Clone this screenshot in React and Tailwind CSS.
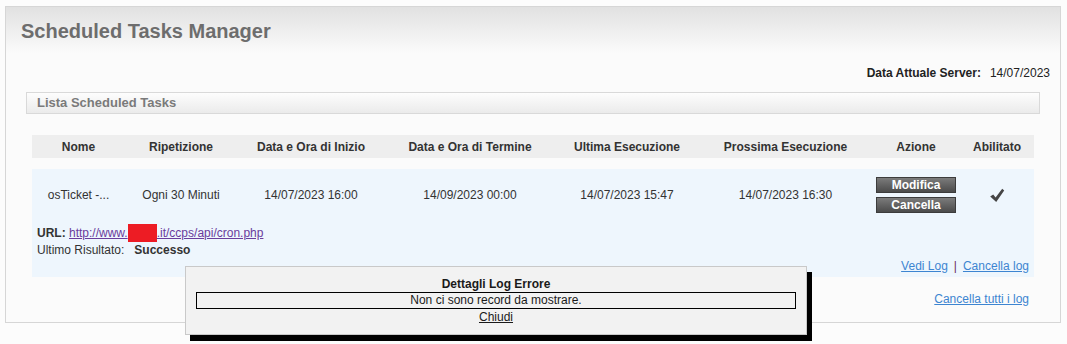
import React from 'react';

const columns = [
  { key: 'nome', label: 'Nome' },
  { key: 'ripetizione', label: 'Ripetizione' },
  { key: 'inizio', label: 'Data e Ora di Inizio' },
  { key: 'termine', label: 'Data e Ora di Termine' },
  { key: 'ultima', label: 'Ultima Esecuzione' },
  { key: 'prossima', label: 'Prossima Esecuzione' },
  { key: 'azione', label: 'Azione' },
  { key: 'abilitato', label: 'Abilitato' },
];

const task = {
  nome: 'osTicket -...',
  ripetizione: 'Ogni 30 Minuti',
  inizio: '14/07/2023 16:00',
  termine: '14/09/2023 00:00',
  ultima: '14/07/2023 15:47',
  prossima: '14/07/2023 16:30',
};

const gridCols = 'grid grid-cols-[93px_112px_148px_170px_144px_173px_88px_74px]';

function ActionButton({ children }) {
  return (
    <button className="w-[80px] h-[16px] border border-[#3c3c3c] bg-[linear-gradient(#7b7b7b,#4b4b4b)] text-white font-bold text-[12px] leading-[14px]">
      {children}
    </button>
  );
}

function CheckIcon() {
  return (
    <svg width="16" height="15" viewBox="0 0 16 15">
      <path d="M1.2 8.4 L4.2 6.4 L6.6 9.6 L13.2 0.8 L15.2 2.4 L7.2 14 Z" fill="#454545" />
    </svg>
  );
}

function App() {
  return (
    <div className="relative min-h-screen bg-[#fcfcfc] pt-[6px] pl-[5px] pr-[6px] text-[12px] text-[#333] font-['Liberation_Sans',Arial,sans-serif]">
      <div className="h-[317px] border border-[#d6d6d6] bg-[linear-gradient(#e1e1e1,#fbfbfb_46px,#fbfbfb)]">
        <h1 className="mt-[10px] pl-[15px] h-[28px] leading-[28px] text-[20px] font-bold text-[#6d6d6d]">
          Scheduled Tasks Manager
        </h1>

        <div className="mt-[20px] pr-[10px] flex justify-end leading-[16px]">
          <span className="font-bold text-[#222]">Data Attuale Server:</span>
          <span className="ml-[9px] text-[#222]">14/07/2023</span>
        </div>

        <div className="mt-[11px] mx-[20px] h-[22px] border border-[#d9d9d9] bg-[linear-gradient(#fdfdfd,#ebebeb)] pl-[10px] text-[13px] leading-[20px] font-bold text-[#7a7a7a]">
          Lista Scheduled Tasks
        </div>

        <div className="mt-[21px] mx-[26px]">
          <div className={`${gridCols} h-[23px] bg-[#eeeeee] items-center font-bold text-[#333]`}>
            {columns.map(col => (
              <div key={col.key} className="text-center">{col.label}</div>
            ))}
          </div>

          <div className="mt-[11px] bg-[#eef6fd]">
            <div className={`${gridCols} h-[52px] items-center`}>
              <div className="text-center">{task.nome}</div>
              <div className="text-center">{task.ripetizione}</div>
              <div className="text-center">{task.inizio}</div>
              <div className="text-center">{task.termine}</div>
              <div className="text-center">{task.ultima}</div>
              <div className="text-center">{task.prossima}</div>
              <div className="flex flex-col items-center gap-[4px]">
                <ActionButton>Modifica</ActionButton>
                <ActionButton>Cancella</ActionButton>
              </div>
              <div className="flex justify-center">
                <CheckIcon />
              </div>
            </div>

            <div className="pt-[4px] pb-[3px] px-[5px] leading-[16px]">
              <div>
                <span className="font-bold">URL:</span>{' '}
                <a href="#" className="text-[#6a3c9c] underline">
                  http://www.
                  <span className="inline-block w-[29px] h-[18px] bg-[#ed1c24] align-middle -mt-[2px]" />
                  .it/ccps/api/cron.php
                </a>
              </div>
              <div>
                Ultimo Risultato:
                <span className="ml-[10px] font-bold">Successo</span>
              </div>
              <div className="flex justify-end">
                <a href="#" className="text-[#3d85d1] underline">Vedi Log</a>
                <span className="mx-[6px] text-[#6b2d5c]">|</span>
                <a href="#" className="text-[#3d85d1] underline">Cancella log</a>
              </div>
            </div>
          </div>

          <div className="mt-[14px] pr-[5px] flex justify-end leading-[16px]">
            <a href="#" className="text-[#3d85d1] underline">Cancella tutti i log</a>
          </div>
        </div>
      </div>

      <div className="absolute left-[185px] top-[266px] w-[622px] h-[69px] border border-[#c9c9c9] bg-[#f2f2f2] shadow-[5px_6px_0_#000] text-[#1a1a1a]">
        <div className="pt-[9px] text-center font-bold leading-[16px]">Dettagli Log Errore</div>
        <div className="mx-[10px] border border-black text-center leading-[15px]">
          Non ci sono record da mostrare.
        </div>
        <div className="text-center leading-[16px]">
          <a href="#" className="underline text-[#1a1a1a]">Chiudi</a>
        </div>
      </div>
    </div>
  );
}

export default App;
